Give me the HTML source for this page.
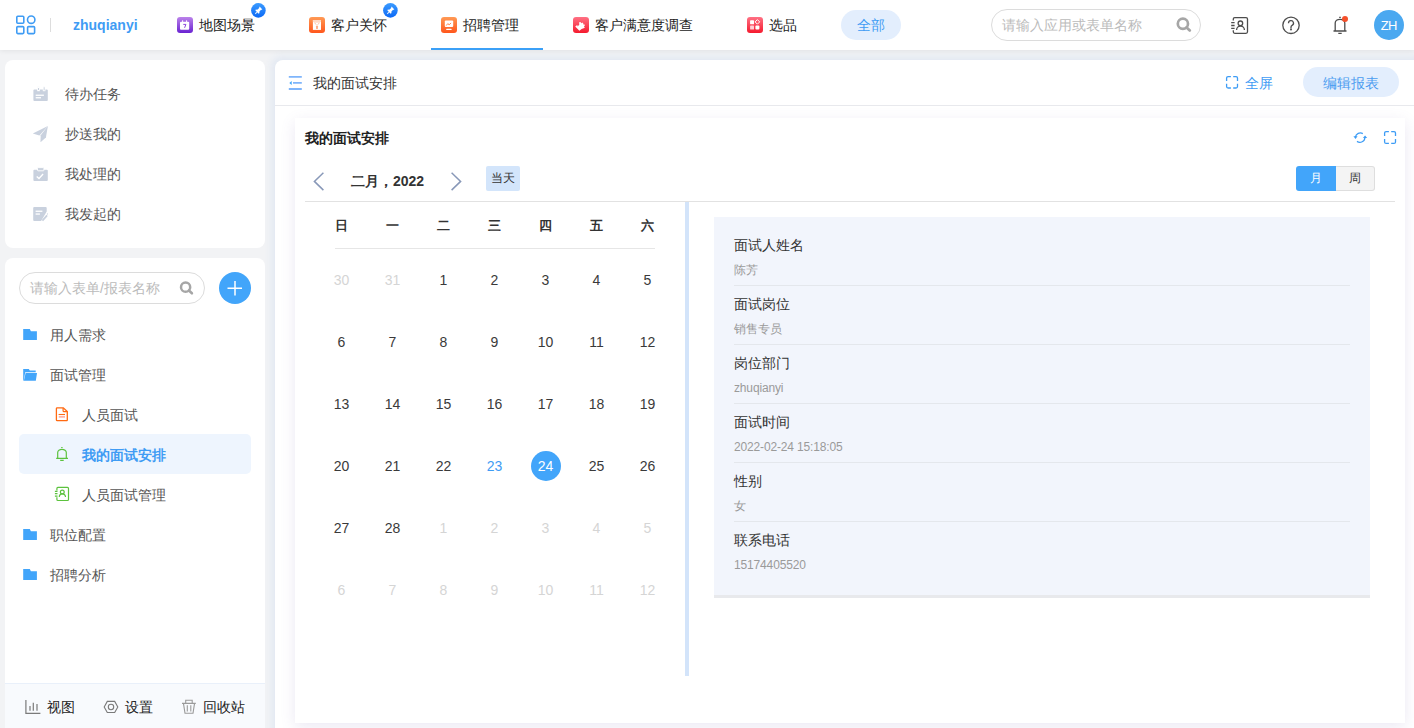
<!DOCTYPE html>
<html><head><meta charset="utf-8">
<style>
*{box-sizing:border-box;margin:0;padding:0}
html,body{width:1414px;height:728px;overflow:hidden}
body{background:#f2f3f5;font-family:"Liberation Sans",sans-serif;font-size:14px;color:#333;position:relative}
.a{position:absolute;white-space:nowrap;line-height:1}
svg{display:block}
/* header */
#hdr{position:absolute;left:0;top:0;width:1414px;height:50px;background:#fff;box-shadow:0 1px 5px rgba(0,0,0,.07)}
.navt{position:absolute;top:18px;font-size:14px;color:#222;line-height:14px}
.nico{position:absolute;top:17px;width:16px;height:16px;border-radius:4px}
.pin{position:absolute;top:3px;width:15px;height:15px;border-radius:50%;background:linear-gradient(#3d9bff,#0a6af5)}
/* sidebar */
.card{position:absolute;background:#fff;border-radius:8px}
.sitem{position:absolute;left:65px;font-size:14px;color:#555;line-height:14px}
.titem{position:absolute;font-size:14px;color:#555;line-height:14px}
/* calendar */
.wd{position:absolute;top:219px;width:30px;text-align:center;font-weight:bold;font-size:13px;color:#333;line-height:13px}
.dt{position:absolute;width:40px;text-align:center;font-size:14px;color:#3a3a3a;line-height:14px}
.dt.g{color:#d5d5d5}
.lbl{position:absolute;left:734px;font-size:14px;color:#333;line-height:14px}
.val{position:absolute;left:734px;font-size:12px;color:#9a9a9a;line-height:12px;letter-spacing:-0.15px}
.dv{position:absolute;left:734px;width:616px;height:1px;background:#e4e7ec}
</style></head>
<body>
<div id="hdr">
  <!-- grid icon -->
  <svg class="a" style="left:16px;top:15px" width="20" height="20" viewBox="0 0 20 20" fill="none" stroke="#3f9cf4" stroke-width="1.6">
    <rect x="0.8" y="1.2" width="7" height="7" rx="1"/>
    <circle cx="15.2" cy="4.7" r="3.7"/>
    <rect x="0.8" y="11.6" width="7" height="7" rx="1"/>
    <rect x="11.6" y="11.6" width="7" height="7" rx="1"/>
  </svg>
  <div class="a" style="left:50px;top:18px;width:1px;height:14px;background:#ddd"></div>
  <div class="a" style="left:73px;top:17px;font-size:14px;font-weight:bold;color:#3f9cf4;line-height:16px">zhuqianyi</div>

  <svg class="a" style="left:177px;top:17px" width="16" height="16" viewBox="0 0 16 16"><defs><linearGradient id="g1" x1="0" y1="0" x2="0" y2="1"><stop offset="0" stop-color="#bb82ea"/><stop offset="1" stop-color="#6a22d2"/></linearGradient></defs><rect width="16" height="16" rx="3" fill="url(#g1)"/><rect x="3" y="4.8" width="9.2" height="8" rx="1" fill="#fff"/><rect x="5.1" y="3.3" width="1" height="2.5" fill="#fff"/><rect x="9.1" y="3.3" width="1" height="2.5" fill="#fff"/><path d="M6.3 7.4h2.6l-1.3 3.4" stroke="#8a45dc" stroke-width="1" fill="none"/></svg>
  <div class="navt" style="left:199px">地图场景</div>
  <svg class="a" style="left:251px;top:3px" width="15" height="15" viewBox="0 0 15 15"><defs><linearGradient id="pg251" x1="0" y1="0" x2="0" y2="1"><stop offset="0" stop-color="#3b9bff"/><stop offset="1" stop-color="#0b68f6"/></linearGradient></defs><circle cx="7.4" cy="7.4" r="7.3" fill="url(#pg251)"/><path d="M8.6 3.6l2.8 2.8-1.6.6-1.5 1.8.2 1.3-.8.6-3.4-3.4.6-.8 1.3.2 1.8-1.5z" fill="#fff"/><path d="M6.2 8.8L4.2 10.8" stroke="#fff" stroke-width="1.1" opacity=".85"/></svg>

  <svg class="a" style="left:309px;top:17px" width="16" height="16" viewBox="0 0 16 16"><defs><linearGradient id="g2" x1="0" y1="0" x2="0" y2="1"><stop offset="0" stop-color="#ff9a55"/><stop offset="1" stop-color="#ff561c"/></linearGradient></defs><rect width="16" height="16" rx="3" fill="url(#g2)"/><rect x="3.9" y="3" width="8.1" height="9.9" fill="#fff"/><path d="M3.9 3h8.1v1.8l-1.6.9H5.5l-1.6-.9z" fill="#ffd9c4"/><path d="M5.6 6.2l1.6 1.1M10.4 6.2l-1.6 1.1" stroke="#ffb890" stroke-width=".9"/><rect x="7.2" y="7.6" width="1.6" height="0.9" fill="#ffc3a3"/><path d="M6.9 9h2.2l-.2 2.3-.9.9-.9-.9z" fill="#ffae85"/></svg>
  <div class="navt" style="left:331px">客户关怀</div>
  <svg class="a" style="left:383px;top:3px" width="15" height="15" viewBox="0 0 15 15"><defs><linearGradient id="pg383" x1="0" y1="0" x2="0" y2="1"><stop offset="0" stop-color="#3b9bff"/><stop offset="1" stop-color="#0b68f6"/></linearGradient></defs><circle cx="7.4" cy="7.4" r="7.3" fill="url(#pg383)"/><path d="M8.6 3.6l2.8 2.8-1.6.6-1.5 1.8.2 1.3-.8.6-3.4-3.4.6-.8 1.3.2 1.8-1.5z" fill="#fff"/><path d="M6.2 8.8L4.2 10.8" stroke="#fff" stroke-width="1.1" opacity=".85"/></svg>

  <svg class="a" style="left:441px;top:17px" width="16" height="16" viewBox="0 0 16 16"><defs><linearGradient id="g3" x1="0" y1="0" x2="0" y2="1"><stop offset="0" stop-color="#ff9a55"/><stop offset="1" stop-color="#ff561c"/></linearGradient></defs><rect width="16" height="16" rx="3" fill="url(#g3)"/><rect x="3.8" y="3.6" width="8.4" height="6.4" rx="1" fill="#fff"/><path d="M5.2 8.6l1.6-2 1.3 1.2 2-1.8" stroke="#ff7a3a" stroke-width="0.9" fill="none"/><rect x="5.2" y="11.8" width="5.4" height="1.1" rx=".5" fill="#fff"/></svg>
  <div class="navt" style="left:463px">招聘管理</div>
  <div class="a" style="left:431px;top:48px;width:112px;height:2px;background:#3ba0f7"></div>

  <svg class="a" style="left:573px;top:17px" width="16" height="16" viewBox="0 0 16 16"><defs><linearGradient id="g4" x1="0" y1="0" x2="0" y2="1"><stop offset="0" stop-color="#ff7184"/><stop offset="1" stop-color="#f51a2e"/></linearGradient></defs><rect width="16" height="16" rx="3" fill="url(#g4)"/><path d="M2.2 9.4l2-1.4 .6 1.4 1.6-2.2-.5-1.7 1.5-.6 1.2 1.4 1.3-.9.6 2.2 1.6.2-1.1 1.9.9 1.1-3.3 1.3-2.2 1.6z" fill="#fff"/></svg>
  <div class="navt" style="left:595px">客户满意度调查</div>

  <svg class="a" style="left:747px;top:17px" width="16" height="16" viewBox="0 0 16 16"><defs><linearGradient id="g5" x1="0" y1="0" x2="0" y2="1"><stop offset="0" stop-color="#ff7184"/><stop offset="1" stop-color="#f51a2e"/></linearGradient></defs><rect width="16" height="16" rx="3" fill="url(#g5)"/><rect x="3.1" y="3.3" width="3.9" height="4" rx=".6" fill="#fff"/><path d="M10.4 2.6l2.3 2.3-2.3 2.3-2.3-2.3z" fill="none" stroke="#fff" stroke-width="1"/><rect x="3.1" y="8.6" width="3.9" height="4" rx=".6" fill="#ffd0d6"/><rect x="8.4" y="8.6" width="4" height="4" rx="1" fill="#fff"/></svg>
  <div class="navt" style="left:769px">选品</div>

  <div class="a" style="left:841px;top:10px;width:60px;height:30px;border-radius:15px;background:#e3eefd"></div>
  <div class="navt" style="left:857px;color:#3f9cf4">全部</div>

  <div class="a" style="left:991px;top:9px;width:210px;height:32px;border:1px solid #dcdcdc;border-radius:16px"></div>
  <div class="navt" style="left:1002px;color:#bbb">请输入应用或表单名称</div>


  <svg class="a" style="left:1172px;top:12px" width="24" height="24" viewBox="0 0 24 24" fill="none" stroke="#a6a6a6"><circle cx="10.9" cy="11.7" r="5.1" stroke-width="2.7"/><path d="M14.6 15.4l3.2 3" stroke-width="2.8" stroke-linecap="round"/></svg>
  <svg class="a" style="left:1228px;top:13px" width="24" height="24" viewBox="0 0 24 24" fill="none" stroke="#4d4d4d" stroke-width="1.3"><path d="M5.3 7.6V6.1a1.5 1.5 0 0 1 1.5-1.5h11.2a1.5 1.5 0 0 1 1.5 1.5v12.7a1.5 1.5 0 0 1-1.5 1.5H6.8a1.5 1.5 0 0 1-1.5-1.5v-1.6"/><path d="M3.2 9.6h3.4M3.2 12.5h3.4M3.2 15.3h3.4"/><circle cx="12.4" cy="10.3" r="2.3"/><path d="M8.6 16.9a3.9 3.9 0 0 1 7.8 0"/></svg>
  <svg class="a" style="left:1279px;top:13px" width="24" height="24" viewBox="0 0 24 24" fill="none" stroke="#4d4d4d" stroke-width="1.3"><circle cx="12" cy="12.3" r="8.2"/><path d="M9.5 10.2a2.5 2.5 0 1 1 3.6 2.2c-.8.4-1.1.9-1.1 1.8v.8" /><circle cx="12" cy="16.4" r=".4" fill="#4d4d4d"/></svg>
  <svg class="a" style="left:1328px;top:13px" width="24" height="24" viewBox="0 0 24 24" fill="none" stroke="#4d4d4d" stroke-width="1.3"><path d="M11.2 4.3h1.6M5.5 18h13M7.2 18V10a4.8 3.7 0 0 1 9.6 0v8M10.3 20.4h3.4"/><circle cx="17" cy="5.9" r="3" fill="#f4502a" stroke="none"/></svg>
  <div class="a" style="left:1374px;top:10px;width:30px;height:30px;border-radius:50%;background:#4aa8f0"></div>
  <div class="a" style="left:1374px;top:19px;width:30px;text-align:center;color:#fff;font-size:13px;line-height:13px;letter-spacing:-0.6px;text-indent:-0.6px">ZH</div>
</div>

<!-- sidebar card 1 -->
<div class="card" style="left:5px;top:60px;width:260px;height:188px"></div>
<div class="sitem" style="top:87px">待办任务</div>
<div class="sitem" style="top:127px">抄送我的</div>
<div class="sitem" style="top:167px">我处理的</div>
<div class="sitem" style="top:207px">我发起的</div>


<svg class="a" style="left:32px;top:86px" width="16" height="16" viewBox="0 0 16 16"><rect x="1.4" y="3.5" width="14.4" height="11.4" rx="1" fill="#c9d1de"/><rect x="5.6" y="0.8" width="1.8" height="4" fill="#c9d1de" stroke="#fff" stroke-width=".8"/><rect x="11.2" y="0.8" width="1.8" height="4" fill="#c9d1de" stroke="#fff" stroke-width=".8"/><rect x="3.7" y="8.6" width="8.2" height="1.3" fill="#fff"/><rect x="3.7" y="11.1" width="5.3" height="1.3" fill="#fff"/></svg>
<svg class="a" style="left:32px;top:126px" width="16" height="16" viewBox="0 0 16 16" fill="#c9d1de"><path d="M15.9 0.1L0.8 7.4 7.4 9.4z"/><path d="M15.9 0.1L8.7 9.2 8.5 16.3 13.9 11.4z"/></svg>
<svg class="a" style="left:32px;top:166px" width="16" height="16" viewBox="0 0 16 16"><rect x="1.4" y="3.7" width="14.4" height="11.4" rx="1" fill="#c9d1de"/><rect x="5.5" y="1.6" width="6.4" height="3.2" rx=".6" fill="#c9d1de" stroke="#fff" stroke-width=".9"/><path d="M4.7 10.4l2.3 2.1 4.1-4.4" stroke="#fff" stroke-width="1.4" fill="none"/></svg>
<svg class="a" style="left:32px;top:206px" width="16" height="16" viewBox="0 0 16 16"><path d="M2.2 1h11.5a1 1 0 0 1 1 1v3.4L9.1 15H2.2a1 1 0 0 1-1-1V2a1 1 0 0 1 1-1z" fill="#c9d1de"/><rect x="3.6" y="4.6" width="6.8" height="1.3" fill="#fff"/><rect x="3.6" y="7.4" width="4.3" height="1.3" fill="#fff"/><path d="M10.4 14.6l4.7-5.3" stroke="#c9d1de" stroke-width="1.8"/><path d="M15.2 7.6l.7.7" stroke="#c9d1de" stroke-width="1.2"/></svg>
<!-- sidebar card 2 -->
<div class="card" style="left:5px;top:258px;width:260px;height:478px;overflow:hidden">
  <div style="position:absolute;left:0;top:425px;width:260px;height:60px;background:#f8fafd;border-top:1px solid #e9f0fa"></div>
</div>
<div class="a" style="left:19px;top:272px;width:186px;height:32px;border:1px solid #dcdcdc;border-radius:16px"></div>
<div class="titem" style="left:30px;top:281px;color:#bbb">请输入表单/报表名称</div>



<svg class="a" style="left:176px;top:280px" width="20" height="18" viewBox="0 0 20 18" fill="none" stroke="#a6a6a6"><circle cx="9.6" cy="7.2" r="4.6" stroke-width="2.5"/><path d="M12.9 10.5l3 2.8" stroke-width="2.6" stroke-linecap="round"/></svg>
<svg class="a" style="left:219px;top:272px" width="32" height="32" viewBox="0 0 32 32"><circle cx="16" cy="16" r="16" fill="#42a5fa"/><path d="M8.5 16.3h14.5M16 9v14.5" stroke="#fff" stroke-width="1.5"/></svg>
<svg class="a" style="left:20px;top:325px" width="20" height="20" viewBox="0 0 20 20" fill="#42a5fa"><path d="M3.2 4.1h6.6l1.1 2.1h6v8.9H3.2z"/></svg>
<svg class="a" style="left:20px;top:365px" width="20" height="20" viewBox="0 0 20 20" fill="#42a5fa"><path d="M3.2 4.1h5.6l1 1.5h5.9v1.6H5.2l-1.5 8.5h-.5z"/><path d="M5.6 8h11.4l-1.2 7.7H3.9z"/></svg>
<svg class="a" style="left:51px;top:403px" width="20" height="20" viewBox="0 0 20 20" fill="none"><path d="M6.2 4.8h6.1l4 3.8v8.3a.8.8 0 0 1-.8.8H6.2a.8.8 0 0 1-.8-.8V5.6a.8.8 0 0 1 .8-.8z" stroke="#ff6a12" stroke-width="1.3"/><path d="M12.1 4.9v2.8c0 .5.4.9.9.9h3.1" stroke="#ff6a12" stroke-width="1.2"/><path d="M7.6 11.5h6.4" stroke="#ff6a12" stroke-width="1.1"/><path d="M7.8 13.9h6.2" stroke="#ff9a8a" stroke-width="1.3"/></svg>
<svg class="a" style="left:51px;top:483px" width="20" height="20" viewBox="0 0 20 20" fill="none" stroke="#5cc23e" stroke-width="1.2"><path d="M5.9 7.4V5.4a1 1 0 0 1 1-1h9.6a1 1 0 0 1 1 1v11.1a1 1 0 0 1-1 1H6.9a1 1 0 0 1-1-1v-2.2"/><path d="M3.9 8.3h2.6M3.9 10.7h2.6M3.9 13.1h2.6"/><circle cx="11.3" cy="9" r="1.9"/><path d="M8.3 13.9a3.1 3.1 0 0 1 6.2 0"/></svg>
<svg class="a" style="left:22px;top:696px" width="20" height="20" viewBox="0 0 20 20" fill="none" stroke="#7a7a7a" stroke-width="1.2"><path d="M3.9 3.9v13.5h14.5M8 10v4.8M11.3 6.8v8M15 7.9v6.9"/></svg>
<svg class="a" style="left:100px;top:696px" width="20" height="20" viewBox="0 0 20 20" fill="none" stroke="#7a7a7a" stroke-width="1.1"><path d="M7.3 5.4h7.4l3.1 5.6-3.1 5.5H7.3L4.2 11z"/><circle cx="11" cy="11" r="2.7"/></svg>
<svg class="a" style="left:178px;top:696px" width="20" height="20" viewBox="0 0 20 20" fill="none" stroke="#9a9a9a" stroke-width="1.1"><path d="M4 7.4h13.8M7.7 7.4V4.2h6.5v3.2M5.5 7.6l1.5 9.7h8l1.5-9.7M9.3 9.3v6.3M12.8 9.3v6.3"/></svg>
<div class="titem" style="left:50px;top:328px">用人需求</div>
<div class="titem" style="left:50px;top:368px">面试管理</div>
<div class="titem" style="left:82px;top:408px">人员面试</div>
<div class="a" style="left:19px;top:434px;width:232px;height:40px;border-radius:5px;background:#eef5fe"></div>
<svg class="a" style="left:51px;top:443px" width="20" height="20" viewBox="0 0 20 20" fill="none" stroke="#5cc23e" stroke-width="1.2"><path d="M10.2 4.5h1.4M5.2 15.4h11.8M6.7 15.4V9.5a4.3 3.2 0 0 1 8.6 0v5.9M9.2 17.4h3.5"/></svg>
<div class="titem" style="left:82px;top:448px;color:#3f9cf4;font-weight:bold">我的面试安排</div>
<div class="titem" style="left:82px;top:488px">人员面试管理</div>
<svg class="a" style="left:20px;top:525px" width="20" height="20" viewBox="0 0 20 20" fill="#42a5fa"><path d="M3.2 4.1h6.6l1.1 2.1h6v8.9H3.2z"/></svg>
<svg class="a" style="left:20px;top:565px" width="20" height="20" viewBox="0 0 20 20" fill="#42a5fa"><path d="M3.2 4.1h6.6l1.1 2.1h6v8.9H3.2z"/></svg>
<div class="titem" style="left:50px;top:528px">职位配置</div>
<div class="titem" style="left:50px;top:568px">招聘分析</div>

<div class="titem" style="left:47px;top:700px;color:#222">视图</div>
<div class="titem" style="left:125px;top:700px;color:#222">设置</div>
<div class="titem" style="left:203px;top:700px;color:#222">回收站</div>

<!-- main panel -->
<div class="card" style="left:275px;top:60px;width:1150px;height:680px;border-radius:8px 0 0 0;box-shadow:-3px -3px 9px rgba(60,120,225,.09)">
  <div style="position:absolute;left:0;top:45px;width:1139px;height:1px;background:#e8e9ed"></div>
</div>
<div class="titem" style="left:313px;top:76px;color:#333">我的面试安排</div>

<svg class="a" style="left:284px;top:71px" width="22" height="22" viewBox="0 0 22 22"><path d="M4.8 5.9h13M9 11.9h8.8M4.8 18h13" stroke="#7fb5fb" stroke-width="1.8"/><path d="M5.3 11.9L7.7 10v3.9z" fill="#3fa6fb"/></svg>
<svg class="a" style="left:1221px;top:71px" width="22" height="22" viewBox="0 0 22 22" fill="none" stroke="#3d9cf5" stroke-width="1.3"><path d="M5.6 9.9V7.1a1.5 1.5 0 0 1 1.5-1.5h2.8M12.2 5.6H15a1.5 1.5 0 0 1 1.5 1.5v2.8M16.5 12.7v2.8a1.5 1.5 0 0 1-1.5 1.5h-2.8M9.9 17H7.1a1.5 1.5 0 0 1-1.5-1.5v-2.8"/></svg>
<div class="a" style="left:1245px;top:76px;color:#3f9cf4;font-size:14px;line-height:14px">全屏</div>
<div class="a" style="left:1303px;top:67px;width:96px;height:30px;border-radius:15px;background:#e3eefd"></div>
<div class="a" style="left:1323px;top:76px;color:#4a9cf0;font-size:14px;line-height:14px">编辑报表</div>

<!-- report card -->
<div class="a" style="left:295px;top:118px;width:1110px;height:605px;background:#fff;box-shadow:0 4px 14px rgba(110,90,170,.14)"></div>
<svg class="a" style="left:1349px;top:127px" width="22" height="22" viewBox="0 0 22 22" fill="none" stroke="#3d9cf5" stroke-width="1.3"><path d="M13.8 6.6a5 5 0 0 0-7.4 3.4M8 14.4a5 5 0 0 0 7.9-4"/><path d="M4.4 9.3h4.2l-2.1 2.6z" fill="#3d9cf5" stroke="none"/><path d="M13.9 11.1h4.3l-2.15-2.5z" fill="#3d9cf5" stroke="none"/></svg>
<svg class="a" style="left:1379px;top:127px" width="22" height="22" viewBox="0 0 22 22" fill="none" stroke="#3d9cf5" stroke-width="1.3"><path d="M5.6 9V6.1a1.5 1.5 0 0 1 1.5-1.5h2.8M12.2 4.6H15a1.5 1.5 0 0 1 1.5 1.5V9M16.5 12.1v2.8a1.5 1.5 0 0 1-1.5 1.5h-2.8M9.9 16.4H7.1a1.5 1.5 0 0 1-1.5-1.5v-2.8"/></svg>
<div class="a" style="left:305px;top:131px;font-weight:bold;font-size:14px;line-height:14px;color:#222">我的面试安排</div>

<svg class="a" style="left:308px;top:168px" width="24" height="28" viewBox="0 0 24 28" fill="none" stroke="#8898b8" stroke-width="1.5"><path d="M15.4 4.8L6.4 13.4l9 8.7"/></svg>
<svg class="a" style="left:445px;top:168px" width="24" height="28" viewBox="0 0 24 28" fill="none" stroke="#8898b8" stroke-width="1.5"><path d="M6.6 4.8l9 8.6-9 8.7"/></svg>
<div class="a" style="left:351px;top:174px;font-weight:bold;font-size:14px;line-height:14px;color:#333">二月，2022</div>
<div class="a" style="left:486px;top:166px;width:34px;height:25px;border-radius:2px;background:#d3e5fb"></div>
<div class="a" style="left:491px;top:172px;font-size:12px;line-height:12px;color:#333">当天</div>

<div class="a" style="left:1296px;top:166px;width:40px;height:25px;border-radius:3px 0 0 3px;background:#42a5fa"></div>
<div class="a" style="left:1336px;top:166px;width:39px;height:25px;border:1px solid #dedede;border-left:none;border-radius:0 3px 3px 0;background:#f4f4f4"></div>
<div class="a" style="left:1310px;top:172px;font-size:12px;line-height:12px;color:#fff">月</div>
<div class="a" style="left:1349px;top:172px;font-size:12px;line-height:12px;color:#333">周</div>

<div class="a" style="left:305px;top:201px;width:1090px;height:1px;background:#e2e2e2"></div>
<div class="a" style="left:685px;top:202px;width:4px;height:474px;background:#d3e4fa"></div>

<div class="wd" style="left:326.5px">日</div>
<div class="wd" style="left:377.5px">一</div>
<div class="wd" style="left:428.5px">二</div>
<div class="wd" style="left:479.5px">三</div>
<div class="wd" style="left:530.5px">四</div>
<div class="wd" style="left:581.5px">五</div>
<div class="wd" style="left:632.5px">六</div>
<div class="a" style="left:335px;top:248px;width:320px;height:1px;background:#e6e6e6"></div>
<div class="dt g" style="left:321.5px;top:273px">30</div>
<div class="dt g" style="left:372.5px;top:273px">31</div>
<div class="dt " style="left:423.5px;top:273px">1</div>
<div class="dt " style="left:474.5px;top:273px">2</div>
<div class="dt " style="left:525.5px;top:273px">3</div>
<div class="dt " style="left:576.5px;top:273px">4</div>
<div class="dt " style="left:627.5px;top:273px">5</div>
<div class="dt " style="left:321.5px;top:335px">6</div>
<div class="dt " style="left:372.5px;top:335px">7</div>
<div class="dt " style="left:423.5px;top:335px">8</div>
<div class="dt " style="left:474.5px;top:335px">9</div>
<div class="dt " style="left:525.5px;top:335px">10</div>
<div class="dt " style="left:576.5px;top:335px">11</div>
<div class="dt " style="left:627.5px;top:335px">12</div>
<div class="dt " style="left:321.5px;top:397px">13</div>
<div class="dt " style="left:372.5px;top:397px">14</div>
<div class="dt " style="left:423.5px;top:397px">15</div>
<div class="dt " style="left:474.5px;top:397px">16</div>
<div class="dt " style="left:525.5px;top:397px">17</div>
<div class="dt " style="left:576.5px;top:397px">18</div>
<div class="dt " style="left:627.5px;top:397px">19</div>
<div class="dt " style="left:321.5px;top:459px">20</div>
<div class="dt " style="left:372.5px;top:459px">21</div>
<div class="dt " style="left:423.5px;top:459px">22</div>
<div class="dt " style="left:474.5px;top:459px;color:#3f9cf4">23</div>
<div class="a" style="left:530.5px;top:451px;width:30px;height:30px;border-radius:50%;background:#42a5fa"></div>
<div class="dt " style="left:525.5px;top:459px;color:#fff">24</div>
<div class="dt " style="left:576.5px;top:459px">25</div>
<div class="dt " style="left:627.5px;top:459px">26</div>
<div class="dt " style="left:321.5px;top:521px">27</div>
<div class="dt " style="left:372.5px;top:521px">28</div>
<div class="dt g" style="left:423.5px;top:521px">1</div>
<div class="dt g" style="left:474.5px;top:521px">2</div>
<div class="dt g" style="left:525.5px;top:521px">3</div>
<div class="dt g" style="left:576.5px;top:521px">4</div>
<div class="dt g" style="left:627.5px;top:521px">5</div>
<div class="dt g" style="left:321.5px;top:583px">6</div>
<div class="dt g" style="left:372.5px;top:583px">7</div>
<div class="dt g" style="left:423.5px;top:583px">8</div>
<div class="dt g" style="left:474.5px;top:583px">9</div>
<div class="dt g" style="left:525.5px;top:583px">10</div>
<div class="dt g" style="left:576.5px;top:583px">11</div>
<div class="dt g" style="left:627.5px;top:583px">12</div>

<!-- detail panel -->
<div class="a" style="left:714px;top:217px;width:656px;height:381px;background:#f2f5fc;border-bottom:3px solid #e8e9ec"></div>
<div class="lbl" style="top:238px">面试人姓名</div>
<div class="val" style="top:264px">陈芳</div>
<div class="dv" style="top:285px"></div>
<div class="lbl" style="top:297px">面试岗位</div>
<div class="val" style="top:323px">销售专员</div>
<div class="dv" style="top:344px"></div>
<div class="lbl" style="top:356px">岗位部门</div>
<div class="val" style="top:382px">zhuqianyi</div>
<div class="dv" style="top:403px"></div>
<div class="lbl" style="top:415px">面试时间</div>
<div class="val" style="top:441px">2022-02-24 15:18:05</div>
<div class="dv" style="top:462px"></div>
<div class="lbl" style="top:474px">性别</div>
<div class="val" style="top:500px">女</div>
<div class="dv" style="top:521px"></div>
<div class="lbl" style="top:533px">联系电话</div>
<div class="val" style="top:559px">15174405520</div>
</body></html>
